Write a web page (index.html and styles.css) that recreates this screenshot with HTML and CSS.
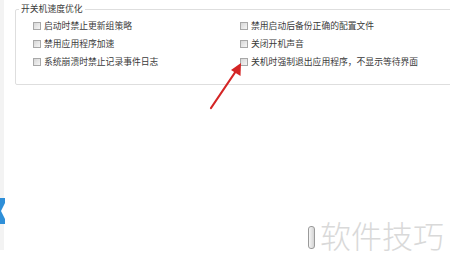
FILE: index.html
```html
<!DOCTYPE html>
<html>
<head>
<meta charset="utf-8">
<link rel="stylesheet" href="styles.css">
</head>
<body>
<div class="page">
  <div class="strip">
    <svg class="chev" width="5" height="26" viewBox="0 0 5 26"><path d="M0 0H5V26H0Z" fill="#2f8fd8"/><path d="M5 5L1 13L5 21Z" fill="#ffffff"/></svg>
  </div>
  <div class="main">
    <fieldset class="group">
      <legend class="title">开关机速度优化</legend>
      <div class="grid">
        <label class="item"><span class="box"></span>启动时禁止更新组策略</label>
        <label class="item"><span class="box"></span>禁用启动后备份正确的配置文件</label>
        <label class="item"><span class="box"></span>禁用应用程序加速</label>
        <label class="item"><span class="box"></span>关闭开机声音</label>
        <label class="item"><span class="box"></span>系统崩溃时禁止记录事件日志</label>
        <label class="item"><span class="box"></span>关机时强制退出应用程序，不显示等待界面</label>
      </div>
    </fieldset>
  </div>
  <svg class="arrow" width="450" height="269" viewBox="0 0 450 269">
    <line x1="211" y1="108" x2="236" y2="71" stroke="#d42525" stroke-width="2.2" stroke-linecap="round"/>
    <path d="M241 63L240.5 76L231 70Z" fill="#d42525"/>
  </svg>
  <div class="btn-edge"></div>
  <div class="watermark">软件技巧</div>
</div>
</body>
</html>
```
FILE: styles.css
```css
html, body {
  margin: 0;
  padding: 0;
  background: #ffffff;
}
.page {
  position: relative;
  width: 450px;
  height: 269px;
  overflow: hidden;
  display: flex;
  align-items: flex-start;
  font-family: "Noto Sans CJK SC", "Noto Sans", sans-serif;
  color: #3a3a3a;
}
.strip {
  width: 4px;
  height: 250px;
  background: #f3f3f3;
  flex: none;
  display: flex;
  flex-direction: column;
  justify-content: flex-start;
  padding-top: 198px;
  box-sizing: border-box;
}
.chev {
  display: block;
}
.main {
  padding: 3px 0 0 11px;
  flex: none;
}
.group {
  margin: 0;
  width: 480px;
  box-sizing: border-box;
  border: 1px solid #dedede;
  border-radius: 2px;
  padding: 2px 0 13px 17px;
  min-width: 0;
}
.title {
  font-size: 8.8px;
  line-height: 12px;
  padding: 0 2px;
  margin-left: -14px;
}
.grid {
  display: grid;
  grid-template-columns: 207px auto;
  grid-auto-rows: 18px;
}
.item {
  display: flex;
  align-items: center;
  gap: 3px;
  font-size: 8.8px;
  line-height: 18px;
  white-space: nowrap;
}
.box {
  width: 6px;
  height: 6px;
  border: 1px solid #a8a8a8;
  background: linear-gradient(135deg, #d6d6d6, #f6f6f6);
  flex: none;
}
.arrow {
  position: absolute;
  left: 0;
  top: 0;
}
.btn-edge {
  position: absolute;
  left: 308px;
  top: 226px;
  width: 7px;
  height: 23px;
  border: 1px solid #9a9a9a;
  border-radius: 3px;
  background: linear-gradient(90deg, #f6f6f6, #d4d4d4);
  box-sizing: border-box;
}
.watermark {
  position: absolute;
  left: 318px;
  top: 215px;
  font-size: 31px;
  line-height: 40px;
  font-weight: 300;
  color: #d9d9d9;
  background: #ffffff;
  padding-left: 2px;
  font-family: "Noto Sans CJK SC", sans-serif;
}
```
